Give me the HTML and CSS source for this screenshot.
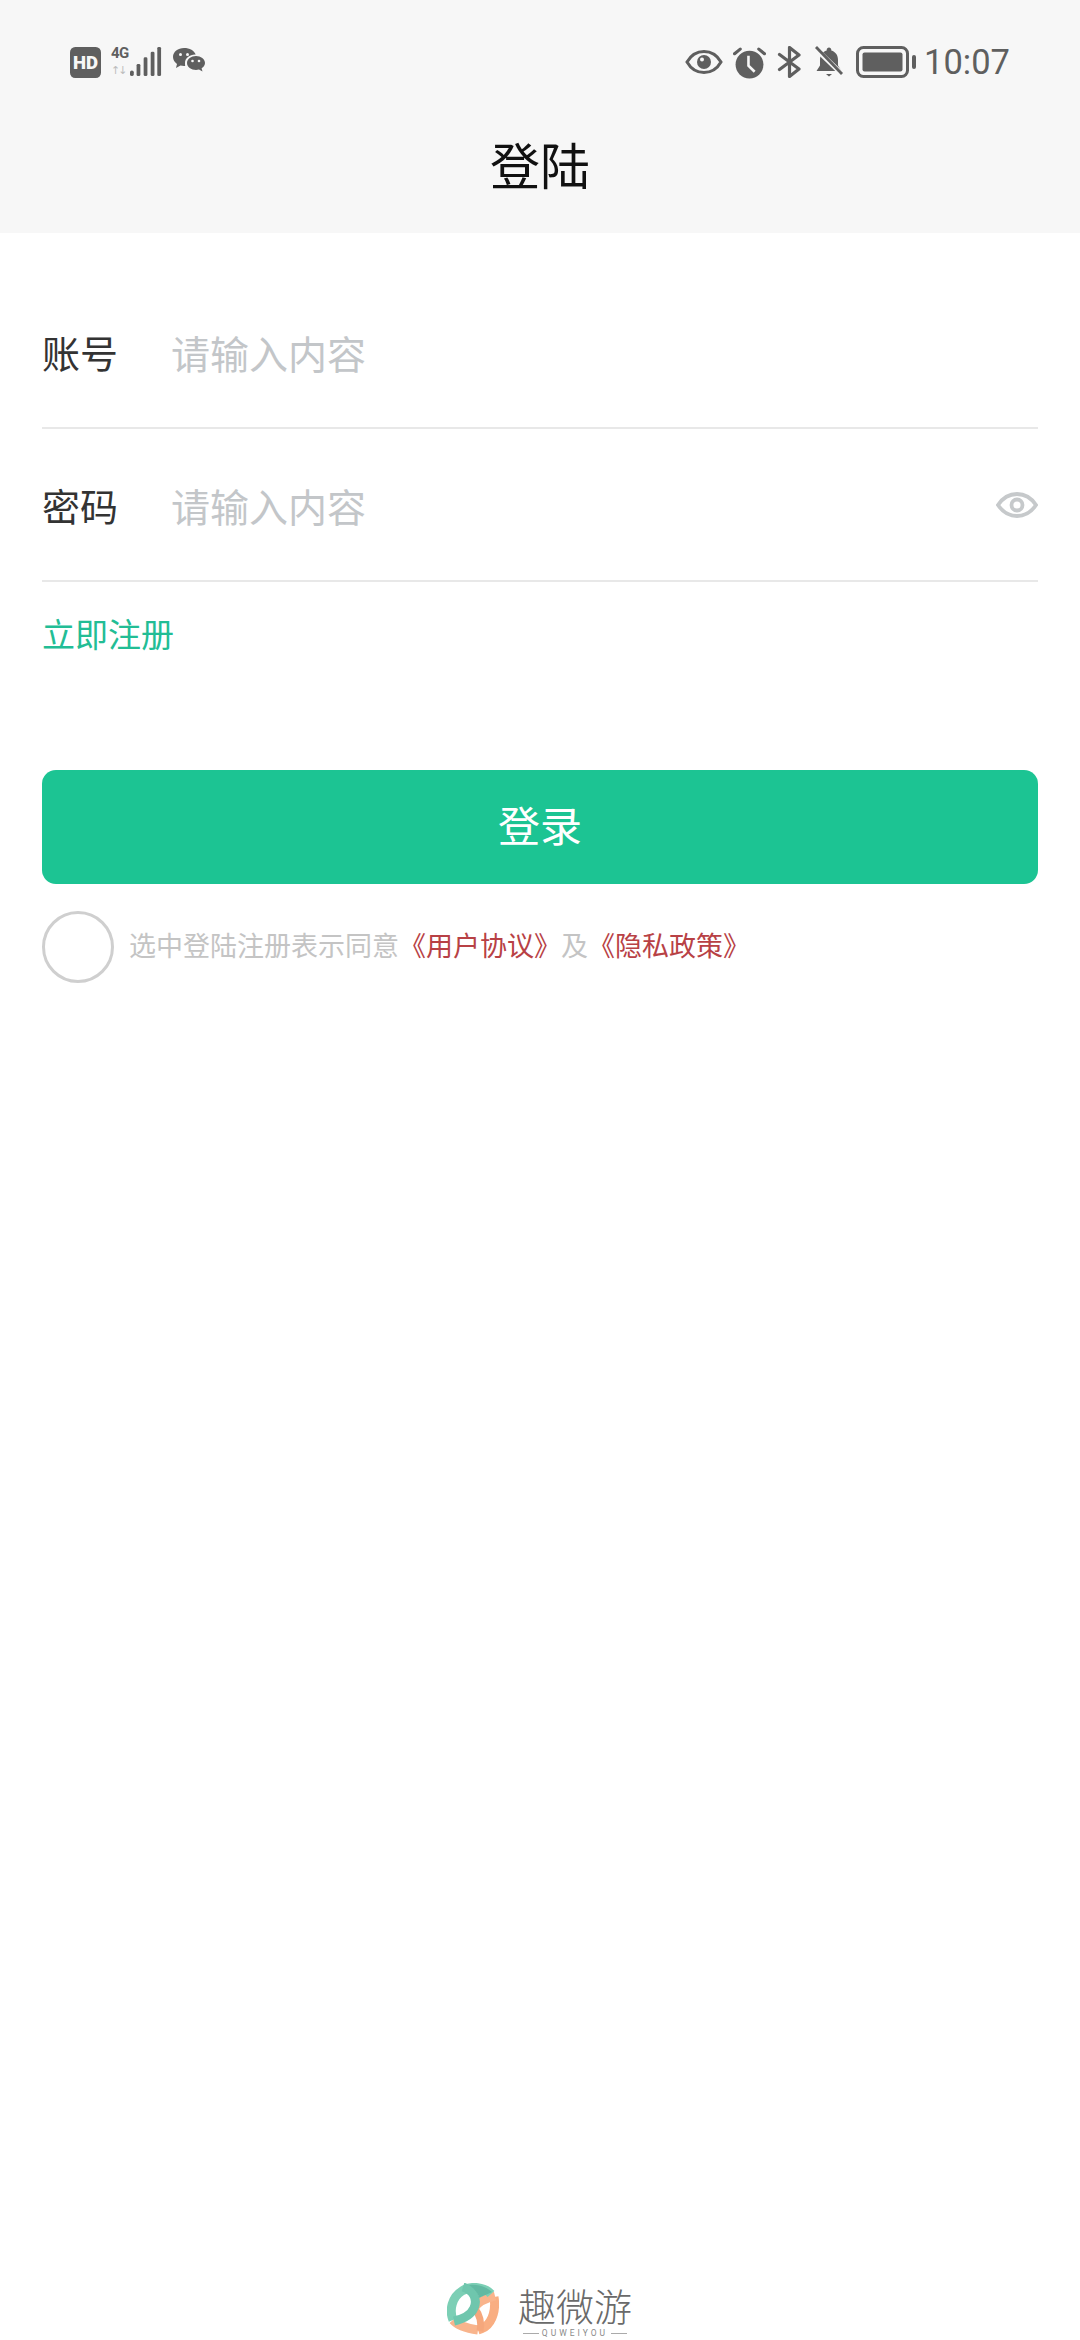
FILE: index.html
```html
<!DOCTYPE html>
<html lang="zh">
<head>
<meta charset="utf-8">
<title>登陆</title>
<link rel="stylesheet" href="styles.css">
</head>
<body>
<div class="page">
  <header class="head">
    <div class="status">
      <div class="status-left">
        <svg class="ic-hd" viewBox="0 0 30 30"><rect width="30" height="30" rx="5" fill="#5f5f5f"/><text x="15" y="21.500" text-anchor="middle" class="hd-text">HD</text></svg>
        <div class="net">
          <div class="net-labels"><span class="net-4g">4G</span><span class="net-arrows">↑↓</span></div>
          <svg class="ic-signal" viewBox="0 0 34 32"><rect x="0" y="25" width="4" height="6" rx="2" fill="#5f5f5f"/><rect x="7" y="18" width="4" height="13" rx="1.500" fill="#5f5f5f"/><rect x="14.500" y="11" width="4" height="20" rx="1.500" fill="#5f5f5f"/><rect x="22" y="5" width="4" height="26" rx="1.500" fill="#5f5f5f"/><rect x="29" y="0" width="4" height="31" rx="1.500" fill="#5f5f5f"/></svg>
        </div>
        <svg class="ic-wechat" viewBox="0 0 32 28"><path d="M11 0C5 0 0 3.800 0 9c0 3 1.700 5.300 4 7l-1 4 4.500-2.400c1.100.3 2.300.4 3.500.4h1.200C12 16.500 12 15.800 12 15c0-4.900 4.600-8.500 10-8.500h.7C21.400 2.700 16.700 0 11 0z" fill="#5f5f5f"/><path d="M32 15c0-4.100-4.200-7-9-7s-9 2.900-9 7 4.200 7 9 7c1 0 2-.1 3-.4l3.500 2-.9-3.300C30.600 19.100 32 17.200 32 15z" fill="#5f5f5f"/><circle cx="7.500" cy="6.500" r="1.500" fill="#f7f7f7"/><circle cx="14.500" cy="6.500" r="1.500" fill="#f7f7f7"/><circle cx="19.500" cy="13" r="1.300" fill="#f7f7f7"/><circle cx="26" cy="13" r="1.300" fill="#f7f7f7"/></svg>
      </div>
      <div class="status-right">
        <svg class="ic-eye" viewBox="0 0 38 26"><path d="M2 13C6 6 12 2.500 19 2.500S32 6 36 13c-4 7-10 10.500-17 10.500S6 20 2 13z" fill="none" stroke="#5f5f5f" stroke-width="3"/><circle cx="19" cy="13" r="7" fill="#5f5f5f"/><circle cx="17" cy="10.500" r="2" fill="#f7f7f7"/></svg>
        <svg class="ic-alarm" viewBox="0 0 32 32"><circle cx="16" cy="18" r="13.500" fill="#5f5f5f"/><path d="M1.500 7.500 7 3M30.500 7.500 25 3" stroke="#5f5f5f" stroke-width="3" stroke-linecap="round"/><path d="M15 9.500V19l6 6" fill="none" stroke="#f7f7f7" stroke-width="2.500"/></svg>
        <svg class="ic-bt" viewBox="0 0 26 32"><path d="M2.500 8.500 22 23 12.500 30.500V1.500L22 9 2.500 23.500" fill="none" stroke="#5f5f5f" stroke-width="3.200" stroke-linejoin="round" stroke-linecap="round"/></svg>
        <svg class="ic-bell" viewBox="0 0 30 32"><path d="M15 1.500c1.300 0 2.300 1 2.300 2.300v.7c4.500 1.300 6.700 5 6.700 9.500v5.500L27.500 25H2.500L6 19.500V14c0-4.500 2.300-8.200 6.700-9.500v-.7c0-1.300 1-2.300 2.300-2.300z" fill="#5f5f5f"/><path d="M12 28h6l-3 2.500z" fill="#5f5f5f"/><path d="M1 2 29 29" stroke="#f7f7f7" stroke-width="5"/><path d="M2 1 28 28" stroke="#5f5f5f" stroke-width="2.800"/></svg>
        <svg class="ic-batt" viewBox="0 0 60 32"><rect x="1.500" y="1.500" width="50" height="29" rx="6" fill="none" stroke="#5f5f5f" stroke-width="3"/><rect x="6.500" y="6.500" width="40" height="19" rx="2" fill="#5f5f5f"/><rect x="56" y="9" width="4" height="14" rx="2" fill="#5f5f5f"/></svg>
        <span class="time">10:07</span>
      </div>
    </div>
    <h1 class="title">登陆</h1>
  </header>

  <main class="form">
    <div class="row">
      <span class="label">账号</span>
      <span class="placeholder">请输入内容</span>
    </div>
    <div class="row">
      <span class="label">密码</span>
      <span class="placeholder">请输入内容</span>
      <svg class="ic-toggle" viewBox="0 0 42 28"><path d="M2 14C7 6.500 13 3 21 3s14 3.500 19 11c-5 7.500-11 11-19 11S7 21.500 2 14z" fill="none" stroke="#c6c9cb" stroke-width="3.800"/><circle cx="21" cy="14" r="5.500" fill="none" stroke="#c6c9cb" stroke-width="3.800"/></svg>
    </div>
    <a class="register">立即注册</a>
    <button class="submit" type="button">登录</button>
    <div class="agree">
      <span class="radio"></span>
      <p class="agree-text">选中登陆注册表示同意<em class="doc">《用户协议》</em>及<em class="doc">《隐私政策》</em></p>
    </div>
  </main>

  <footer class="brand">
    <svg class="logo" viewBox="0 0 52 52" fill="none" stroke-width="9">
      <path d="M31 47C24 46 12 44 6 37" stroke="#f8b48c"/>
      <path d="M47 14C49 26 46 38 38 44 36 45 34 46 31 47" stroke="#f9ae82"/>
      <path d="M27 25C31 19 40 15 48 13" stroke="#f9b48c"/>
      <path d="M27 24C33 32 35 40 33 48" stroke="#f5a77c" stroke-width="7"/>
      <path d="M44 11C38 4 24 2 15 8 5 14 2 27 6 37" stroke="#7ccfb5"/>
      <path d="M16 4C26 7 31 16 27 25 24 32 16 36 7 38" stroke="#6fc6ad"/>
      <path d="M45 9C38 3 30 1 22 2 28 6 31 10 32 15 36 13 41 11 45 9z" fill="#62b9a2"/>
    </svg>
    <div class="brand-words">
      <span class="brand-name">趣微游</span>
      <span class="brand-sub">QUWEIYOU</span>
    </div>
  </footer>
</div>
</body>
</html>
```

FILE: styles.css
```css
* { box-sizing: border-box; }
html, body { margin: 0; padding: 0; background: #fff; }
body { font-family: "Noto Sans CJK SC", "Noto Sans", sans-serif; }
.page { width: 1080px; height: 2340px; display: flex; flex-direction: column; background: #fff; }

.head { height: 233px; background: #f7f7f7; display: flex; flex-direction: column; }
.status { height: 122px; padding: 41px 70px 0 70px; display: flex; justify-content: space-between; align-items: flex-start; }
.status-left { display: flex; align-items: center; gap: 10px; height: 42px; }
.status-right { display: flex; align-items: center; height: 42px; }
.ic-hd { width: 31px; height: 31px; display: block; }
.hd-text { font-family: "Roboto", sans-serif; font-size: 18px; font-weight: 900; fill: #f7f7f7; }
.net { display: flex; align-items: flex-end; gap: 1px; height: 32px; }
.net-labels { display: flex; flex-direction: column; width: 18px; font-family: "Roboto", sans-serif; line-height: 1; color: #5f5f5f; }
.net-4g { font-size: 15px; font-weight: 700; height: 19px; letter-spacing: -0.5px; }
.net-arrows { font-size: 11px; height: 13px; color: #bdbdbd; font-family: "DejaVu Sans", sans-serif; letter-spacing: -2px; }
.ic-signal { width: 32px; height: 32px; display: block; }
.ic-wechat { width: 32px; height: 28px; display: block; margin-left: 1px; }
.ic-eye { width: 38px; height: 26px; display: block; margin-right: 10px; }
.ic-alarm { width: 33px; height: 33px; display: block; margin-right: 11px; }
.ic-bt { width: 26px; height: 32px; display: block; margin-right: 11px; }
.ic-bell { width: 30px; height: 32px; display: block; margin-right: 12px; }
.ic-batt { width: 60px; height: 32px; display: block; margin-right: 8px; }
.time { font-family: "Roboto", sans-serif; font-size: 34.500px; color: #5f5f5f; line-height: 42px; }
.title { margin: 0; text-align: center; font-size: 50px; font-weight: 400; color: #111; line-height: 66px; margin-top: 8px; }

.form { padding: 43px 42px 0; display: flex; flex-direction: column; }
.row { height: 153px; border-bottom: 2px solid #e8e8e8; display: flex; align-items: center; }
.label { width: 130px; font-size: 38px; color: #333; line-height: 52px; font-weight: 400; }
.placeholder { flex: 1; font-size: 39px; color: #c3c6c9; line-height: 52px; margin-left: -1px; }
.ic-toggle { width: 42px; height: 28px; display: block; margin-top: 0; }
.register { display: block; margin-top: 28px; font-size: 33px; line-height: 46px; color: #22bd95; }
.submit { margin-top: 114px; width: 996px; height: 114px; background: #1cc493; border: 0; border-radius: 14px; color: #fff; font-family: inherit; font-size: 42px; padding: 0 0 8px; }
.agree { margin-top: 27px; display: flex; align-items: center; gap: 15px; }
.radio { width: 72px; height: 72px; border: 3px solid #cfcfcf; border-radius: 50%; flex: none; background: #fff; }
.agree-text { margin: 0; font-size: 27px; line-height: 38px; color: #c4c4c4; margin-top: -4px; white-space: nowrap; }
.doc { font-style: normal; color: #b84145; }

.brand { margin-top: auto; height: 57px; display: flex; justify-content: center; align-items: flex-start; gap: 18px; }
.logo { width: 52px; height: 52px; display: block; flex: none; }
.brand-words { display: flex; flex-direction: column; align-items: center; flex: none; width: 116px; margin-top: 1px; }
.brand-name { font-size: 38px; font-weight: 300; color: #6a6a6a; line-height: 42px; white-space: nowrap; }
.brand-sub { font-family: "Roboto", sans-serif; font-size: 8.500px; line-height: 12px; letter-spacing: 3px; color: #8a8a8a; display: flex; align-items: center; gap: 3px; white-space: nowrap; margin-top: 1px; }
.brand-sub::before, .brand-sub::after { content: ""; width: 16px; height: 1px; background: #aaa; }
```
